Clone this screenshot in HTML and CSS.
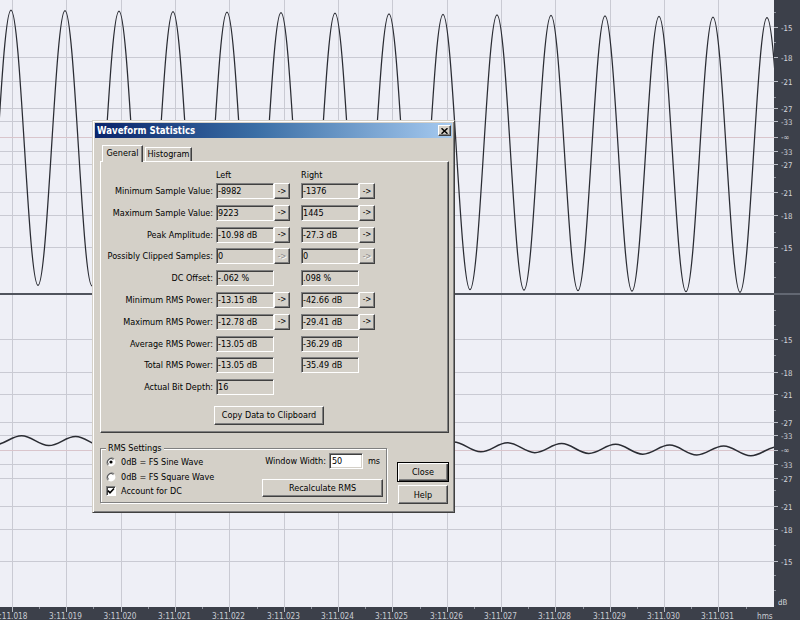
FILE: index.html
```html
<!DOCTYPE html>
<html>
<head>
<meta charset="utf-8">
<title>Waveform Statistics</title>
<link rel="stylesheet" href="styles.css">
</head>
<body>
<div class="app">
  <div class="wave-area">
    <svg class="wave" width="774" height="607" viewBox="0 0 774 607">
      <rect width="774" height="607" fill="#eeeff6"/>
      <path class="grid-v" d="M12.5 0V607M66.5 0V607M121.5 0V607M175.5 0V607M229.5 0V607M284.5 0V607M338.5 0V607M392.5 0V607M447.5 0V607M501.5 0V607M555.5 0V607M610.5 0V607M664.5 0V607M718.5 0V607"/>
      <path class="grid-h" d="M0 26.5H774M0 57.5H774M0 81.5H774M0 108.5H774M0 121.5H774M0 151.5H774M0 164.5H774M0 192.5H774M0 215.5H774M0 247.5H774M0 339.5H774M0 372.5H774M0 394.5H774M0 422.5H774M0 435.5H774M0 464.5H774M0 478.5H774M0 506.5H774M0 529.5H774M0 561.5H774"/>
      <path class="grid-inf" d="M0 137.5H774M0 450.5H774"/>
      <rect class="divider" x="0" y="293" width="774" height="2"/>
      <g transform="matrix(1 0.00997 0 1 0 0)">
        <path class="trace" d="M-43 9.9c9.81 0 17.19 275 27 275c9.81 0 17.19 -275 27 -275c9.81 0 17.19 275 27 275c9.81 0 17.19 -275 27 -275c9.81 0 17.19 275 27 275c9.81 0 17.19 -275 27 -275c9.81 0 17.19 275 27 275c9.81 0 17.19 -275 27 -275c9.81 0 17.19 275 27 275c9.81 0 17.19 -275 27 -275c9.81 0 17.19 275 27 275c9.81 0 17.19 -275 27 -275c9.81 0 17.19 275 27 275c9.81 0 17.19 -275 27 -275c9.81 0 17.19 275 27 275c9.81 0 17.19 -275 27 -275c9.81 0 17.19 275 27 275c9.81 0 17.19 -275 27 -275c9.81 0 17.19 275 27 275c9.81 0 17.19 -275 27 -275c9.81 0 17.19 275 27 275c9.81 0 17.19 -275 27 -275c9.81 0 17.19 275 27 275c9.81 0 17.19 -275 27 -275c9.81 0 17.19 275 27 275c9.81 0 17.19 -275 27 -275c9.81 0 17.19 275 27 275c9.81 0 17.19 -275 27 -275c9.81 0 17.19 275 27 275c9.81 0 17.19 -275 27 -275c9.81 0 17.19 275 27 275c9.81 0 17.19 -275 27 -275"/>
      </g>
      <g transform="matrix(1 0.0145 0 1 0 0)">
        <path class="trace small" d="M-32.3 435.4c9.81 0 17.19 9.5 27 9.5c9.81 0 17.19 -9.5 27 -9.5c9.81 0 17.19 9.5 27 9.5c9.81 0 17.19 -9.5 27 -9.5c9.81 0 17.19 9.5 27 9.5c9.81 0 17.19 -9.5 27 -9.5c9.81 0 17.19 9.5 27 9.5c9.81 0 17.19 -9.5 27 -9.5c9.81 0 17.19 9.5 27 9.5c9.81 0 17.19 -9.5 27 -9.5c9.81 0 17.19 9.5 27 9.5c9.81 0 17.19 -9.5 27 -9.5c9.81 0 17.19 9.5 27 9.5c9.81 0 17.19 -9.5 27 -9.5c9.81 0 17.19 9.5 27 9.5c9.81 0 17.19 -9.5 27 -9.5c9.81 0 17.19 9.5 27 9.5c9.81 0 17.19 -9.5 27 -9.5c9.81 0 17.19 9.5 27 9.5c9.81 0 17.19 -9.5 27 -9.5c9.81 0 17.19 9.5 27 9.5c9.81 0 17.19 -9.5 27 -9.5c9.81 0 17.19 9.5 27 9.5c9.81 0 17.19 -9.5 27 -9.5c9.81 0 17.19 9.5 27 9.5c9.81 0 17.19 -9.5 27 -9.5c9.81 0 17.19 9.5 27 9.5c9.81 0 17.19 -9.5 27 -9.5c9.81 0 17.19 9.5 27 9.5c9.81 0 17.19 -9.5 27 -9.5"/>
      </g>
    </svg>

    <div class="dialog">
      <div class="titlebar">
        <span class="title">Waveform Statistics</span>
        <button class="xbtn" type="button"><svg width="7" height="6" viewBox="0 0 7 6"><path d="M0.5 0.3L6.5 5.7M6.5 0.3L0.5 5.7" stroke="#000" stroke-width="1.5"/></svg></button>
      </div>
      <div class="dlg-body">
        <div class="tabs">
          <div class="tab active">General</div>
          <div class="tab">Histogram</div>
        </div>
        <div class="panel">
          <div class="cols head">
            <span></span><span>Left</span><span></span><span></span><span>Right</span><span></span>
          </div>
          <div class="cols stats">
            <span class="lbl">Minimum Sample Value:</span><span class="fld">-8982</span><button class="arr" type="button">-&gt;</button><span></span><span class="fld">-1376</span><button class="arr" type="button">-&gt;</button>
            <span class="lbl">Maximum Sample Value:</span><span class="fld">9223</span><button class="arr" type="button">-&gt;</button><span></span><span class="fld">1445</span><button class="arr" type="button">-&gt;</button>
            <span class="lbl">Peak Amplitude:</span><span class="fld">-10.98 dB</span><button class="arr" type="button">-&gt;</button><span></span><span class="fld">-27.3 dB</span><button class="arr" type="button">-&gt;</button>
            <span class="lbl">Possibly Clipped Samples:</span><span class="fld">0</span><button class="arr off" type="button">-&gt;</button><span></span><span class="fld">0</span><button class="arr off" type="button">-&gt;</button>
            <span class="lbl">DC Offset:</span><span class="fld">-.062 %</span><span></span><span></span><span class="fld">.098 %</span><span></span>
            <span class="lbl">Minimum RMS Power:</span><span class="fld">-13.15 dB</span><button class="arr" type="button">-&gt;</button><span></span><span class="fld">-42.66 dB</span><button class="arr" type="button">-&gt;</button>
            <span class="lbl">Maximum RMS Power:</span><span class="fld">-12.78 dB</span><button class="arr" type="button">-&gt;</button><span></span><span class="fld">-29.41 dB</span><button class="arr" type="button">-&gt;</button>
            <span class="lbl">Average RMS Power:</span><span class="fld">-13.05 dB</span><span></span><span></span><span class="fld">-36.29 dB</span><span></span>
            <span class="lbl">Total RMS Power:</span><span class="fld">-13.05 dB</span><span></span><span></span><span class="fld">-35.49 dB</span><span></span>
            <span class="lbl">Actual Bit Depth:</span><span class="fld">16</span><span></span><span></span><span></span><span></span>
          </div>
          <button class="btn copy" type="button">Copy Data to Clipboard</button>
        </div>
        <div class="lower">
          <fieldset class="group">
            <legend>RMS Settings</legend>
            <div class="gcontent">
              <div class="opts">
                <div class="opt">
                  <svg class="radio" width="10" height="10" viewBox="0 0 12 12"><circle cx="6" cy="6" r="5.3" fill="#fff"/><path d="M2.3 9.7A5.3 5.3 0 0 1 9.7 2.3" stroke="#808080" stroke-width="1.3" fill="none"/><path d="M3.1 8.9A4.1 4.1 0 0 1 8.9 3.1" stroke="#404040" stroke-width="1" fill="none"/><circle cx="6" cy="6" r="1.9" fill="#000"/></svg>
                  <span>0dB = FS Sine Wave</span>
                </div>
                <div class="opt">
                  <svg class="radio" width="10" height="10" viewBox="0 0 12 12"><circle cx="6" cy="6" r="5.3" fill="#fff"/><path d="M2.3 9.7A5.3 5.3 0 0 1 9.7 2.3" stroke="#808080" stroke-width="1.3" fill="none"/><path d="M3.1 8.9A4.1 4.1 0 0 1 8.9 3.1" stroke="#404040" stroke-width="1" fill="none"/></svg>
                  <span>0dB = FS Square Wave</span>
                </div>
                <div class="opt">
                  <span class="chk"><svg width="8" height="8" viewBox="0 0 8 8"><path d="M1 3.6L3 5.8L7 1.5" stroke="#000" stroke-width="1.6" fill="none"/></svg></span>
                  <span>Account for DC</span>
                </div>
              </div>
              <div class="rms-right">
                <div class="ww">
                  <span>Window Width:</span><span class="inp">50</span><span class="ms">ms</span>
                </div>
                <button class="btn recalc" type="button">Recalculate RMS</button>
              </div>
            </div>
          </fieldset>
          <div class="side">
            <button class="btn default" type="button">Close</button>
            <button class="btn help" type="button">Help</button>
          </div>
        </div>
      </div>
    </div>
  </div>

  <svg class="db-ruler" width="26" height="620" viewBox="0 0 26 620">
    <rect width="26" height="620" fill="#3c404a"/>
    <rect x="0" y="293" width="26" height="2" fill="#626772"/>
    <path class="rtick" d="M0 27.5H4M0 57.5H4M0 81.5H4M0 108.5H4M0 121.5H4M0 137.5H4M0 151.5H4M0 164.5H4M0 192.5H4M0 215.5H4M0 247.5H4M0 339.5H4M0 372.5H4M0 394.5H4M0 422.5H4M0 435.5H4M0 450.5H4M0 464.5H4M0 478.5H4M0 506.5H4M0 529.5H4M0 561.5H4"/>
    <path class="rtick minor" d="M0 12.5H2M0 42.5H2M0 97.5H2M0 177.5H2M0 232.5H2M0 262.5H2M0 277.5H2M0 310.5H2M0 325.5H2M0 355.5H2M0 410.5H2M0 490.5H2M0 545.5H2M0 575.5H2M0 590.5H2"/>
    <g class="rtext">
      <text x="7" y="30.5">-15</text>
      <text x="7" y="60.5">-18</text>
      <text x="7" y="84.5">-21</text>
      <text x="7" y="111.5">-27</text>
      <text x="7" y="124.5">-33</text>
      <text x="7" y="140">-∞</text>
      <text x="7" y="154.5">-33</text>
      <text x="7" y="167.5">-27</text>
      <text x="7" y="195.5">-21</text>
      <text x="7" y="218.5">-18</text>
      <text x="7" y="250.5">-15</text>
      <text x="7" y="342.5">-15</text>
      <text x="7" y="375.5">-18</text>
      <text x="7" y="397.5">-21</text>
      <text x="7" y="425.5">-27</text>
      <text x="7" y="438.5">-33</text>
      <text x="7" y="453">-∞</text>
      <text x="7" y="467.5">-33</text>
      <text x="7" y="481.5">-27</text>
      <text x="7" y="509.5">-21</text>
      <text x="7" y="532.5">-18</text>
      <text x="7" y="564.5">-15</text>
      <text x="4" y="605">dB</text>
    </g>
  </svg>

  <svg class="time-ruler" width="774" height="13" viewBox="0 0 774 13">
    <rect width="774" height="13" fill="#3c404a"/>
    <path class="ttick" d="M12.5 0V5M66.5 0V5M121.5 0V5M175.5 0V5M229.5 0V5M284.5 0V5M338.5 0V5M392.5 0V5M447.5 0V5M501.5 0V5M555.5 0V5M610.5 0V5M664.5 0V5M718.5 0V5"/>
    <path class="ttick minor" d="M39.5 0V2M93.5 0V2M148.5 0V2M202.5 0V2M257.5 0V2M311.5 0V2M365.5 0V2M420.5 0V2M474.5 0V2M528.5 0V2M583.5 0V2M637.5 0V2M691.5 0V2M746.5 0V2"/>
    <g class="ttext">
      <text x="11" y="11.5">3:11.018</text>
      <text x="65.5" y="11.5">3:11.019</text>
      <text x="120" y="11.5">3:11.020</text>
      <text x="174.5" y="11.5">3:11.021</text>
      <text x="228.5" y="11.5">3:11.022</text>
      <text x="283.5" y="11.5">3:11.023</text>
      <text x="337.5" y="11.5">3:11.024</text>
      <text x="391.5" y="11.5">3:11.025</text>
      <text x="446.5" y="11.5">3:11.026</text>
      <text x="500.5" y="11.5">3:11.027</text>
      <text x="554.5" y="11.5">3:11.028</text>
      <text x="609.5" y="11.5">3:11.029</text>
      <text x="663.5" y="11.5">3:11.030</text>
      <text x="717.5" y="11.5">3:11.031</text>
    </g>
    <text class="hms" x="757" y="11.5">hms</text>
  </svg>
</div>
</body>
</html>
```

FILE: styles.css
```css
* { box-sizing: border-box; }

html, body {
  margin: 0;
  padding: 0;
}

body {
  width: 800px;
  height: 620px;
  overflow: hidden;
  background: #3c404a;
  font-family: "DejaVu Sans Condensed", "Liberation Sans", Arial, sans-serif;
}

.app {
  display: grid;
  grid-template-columns: 774px 26px;
  grid-template-rows: 607px 13px;
  width: 800px;
  height: 620px;
}

.wave-area {
  grid-column: 1;
  grid-row: 1;
  position: relative;
  overflow: hidden;
}

.wave { display: block; }

.grid-v, .grid-h {
  stroke: #c9cad3;
  stroke-width: 1;
  fill: none;
}

.grid-inf {
  stroke: #d9c5cc;
  stroke-width: 1;
  fill: none;
}

.divider { fill: #50545d; }

.trace {
  fill: none;
  stroke: #2a2c33;
  stroke-width: 1.25;
}

.trace.small { stroke-width: 1.5; }

.db-ruler {
  grid-column: 2;
  grid-row: 1 / span 2;
  display: block;
}

.time-ruler {
  grid-column: 1;
  grid-row: 2;
  display: block;
}

.rtick, .ttick {
  stroke: #b9bdc6;
  stroke-width: 1;
  fill: none;
}

.rtick.minor, .ttick.minor { stroke: #8d919b; }

.rtext text {
  font-family: "DejaVu Sans Condensed", "Liberation Sans", sans-serif;
  font-size: 7.8px;
  fill: #d4d7dd;
}

.ttext text {
  font-family: "DejaVu Sans Condensed", "Liberation Sans", sans-serif;
  font-size: 8.2px;
  fill: #c9ccd3;
  text-anchor: middle;
}

.hms {
  font-family: "DejaVu Sans Condensed", "Liberation Sans", sans-serif;
  font-size: 8.2px;
  fill: #c9ccd3;
}

/* ---------- dialog ---------- */

.dialog {
  position: absolute;
  left: 92px;
  top: 120px;
  width: 363px;
  height: 393px;
  background: #d4d0c8;
  border: 1px solid;
  border-color: #d4d0c8 #404040 #404040 #d4d0c8;
  box-shadow: inset 1px 1px #ffffff, inset -1px -1px #808080;
  padding: 2px;
  display: flex;
  flex-direction: column;
  font-size: 9px;
  color: #000;
}

.titlebar {
  flex: none;
  height: 15px;
  background: linear-gradient(to right, #0a246a 0%, #3a6ea5 45%, #a6caf0 100%);
  display: flex;
  align-items: center;
  justify-content: space-between;
  padding: 0 1px 0 2px;
}

.title {
  color: #fff;
  font-weight: bold;
  font-size: 9.6px;
  line-height: 15px;
  white-space: nowrap;
}

.xbtn {
  width: 13px;
  height: 11px;
  padding: 0;
  margin: 0;
  background: #d4d0c8;
  border: 1px solid;
  border-color: #fff #404040 #404040 #fff;
  box-shadow: inset -1px -1px #808080;
  display: flex;
  align-items: center;
  justify-content: center;
}

.xbtn svg { display: block; }

.dlg-body {
  flex: 1;
  display: flex;
  flex-direction: column;
  padding: 7px 3px 0 5px;
}

.tabs {
  flex: none;
  display: flex;
  align-items: flex-start;
  height: 17px;
  margin-bottom: -1px;
  padding-left: 2px;
  position: relative;
  z-index: 1;
}

.tab {
  width: 47px;
  height: 14px;
  margin-top: 2px;
  margin-left: 2px;
  background: #d4d0c8;
  border: 1px solid;
  border-bottom: none;
  border-color: #fff #404040 transparent #fff;
  box-shadow: inset -1px 0 #808080;
  text-align: center;
  line-height: 13px;
  white-space: nowrap;
}

.tab.active {
  width: 41px;
  height: 17px;
  margin-top: 0;
  margin-left: 0;
  line-height: 14px;
}

.panel {
  flex: none;
  height: 272px;
  border: 1px solid;
  border-color: #fff #404040 #404040 #fff;
  box-shadow: inset -1px -1px #808080;
  padding-top: 7px;
}

.cols {
  display: grid;
  grid-template-columns: 115px 58px 16px 11px 58px 16px;
}

.head {
  height: 12px;
  line-height: 12px;
  margin-bottom: 2px;
}

.stats {
  grid-auto-rows: 16px;
  row-gap: 5.8px;
}

.lbl {
  text-align: right;
  padding-right: 3px;
  line-height: 16px;
  white-space: nowrap;
}

.fld {
  border: 1px solid;
  border-color: #808080 #fff #fff #808080;
  box-shadow: inset 1px 1px #404040, inset -1px -1px #d4d0c8;
  padding-left: 1px;
  line-height: 14px;
  white-space: nowrap;
  overflow: hidden;
}

.arr, .btn {
  margin: 0;
  padding: 0;
  font-family: inherit;
  color: #000;
  background: #d4d0c8;
  border: 1px solid;
  border-color: #fff #404040 #404040 #fff;
  box-shadow: inset -1px -1px #808080;
  text-align: center;
  white-space: nowrap;
}

.arr {
  width: 16px;
  height: 16px;
  font-size: 8px;
  line-height: 13px;
}

.arr.off {
  color: #8a8a8a;
  text-shadow: 1px 1px #fff;
}

.btn {
  font-size: 9px;
  line-height: 14px;
}

.copy {
  display: block;
  width: 110px;
  height: 19px;
  margin: 10.8px 0 0 113px;
}

.lower {
  display: flex;
  align-items: flex-start;
}

.group {
  margin: 9px 0 0 0;
  width: 287px;
  min-inline-size: 0;
  padding: 0 3px 0 5px;
  border: 1px solid #808080;
  box-shadow: 1px 1px #fff, inset 1px 1px #fff;
}

.group legend {
  padding: 0 2px;
  line-height: 13px;
  background: #d4d0c8;
}

.gcontent {
  display: flex;
  height: 47px;
}

.opts {
  flex: 1;
  display: flex;
  flex-direction: column;
}

.opt {
  height: 14.5px;
  display: flex;
  align-items: center;
  gap: 5px;
  white-space: nowrap;
}

.radio { display: block; flex: none; }

.chk {
  flex: none;
  width: 10px;
  height: 10px;
  background: #fff;
  border: 1px solid;
  border-color: #808080 #fff #fff #808080;
  box-shadow: inset 1px 1px #404040;
  display: flex;
  align-items: center;
  justify-content: center;
}

.chk svg { display: block; }

.rms-right {
  width: 121px;
  margin-top: -2px;
  display: flex;
  flex-direction: column;
}

.ww {
  height: 16px;
  display: flex;
  align-items: center;
  justify-content: flex-end;
  white-space: nowrap;
}

.inp {
  width: 34px;
  height: 16px;
  margin: 0 5px 0 3px;
  background: #fff;
  border: 1px solid;
  border-color: #808080 #fff #fff #808080;
  box-shadow: inset 1px 1px #404040, inset -1px -1px #d4d0c8;
  padding-left: 2px;
  line-height: 14px;
}

.ms { margin-right: 3px; }

.recalc {
  width: 121px;
  height: 18px;
  margin-top: 10px;
}

.side {
  display: flex;
  flex-direction: column;
  margin: 29px 0 0 10px;
}

.default {
  width: 52px;
  height: 20px;
  border: 1px solid #000;
  box-shadow: inset 1px 1px #fff, inset -1px -1px #404040, inset -2px -2px #808080;
}

.help {
  width: 50px;
  height: 19px;
  margin: 3px 0 0 1px;
}
```
